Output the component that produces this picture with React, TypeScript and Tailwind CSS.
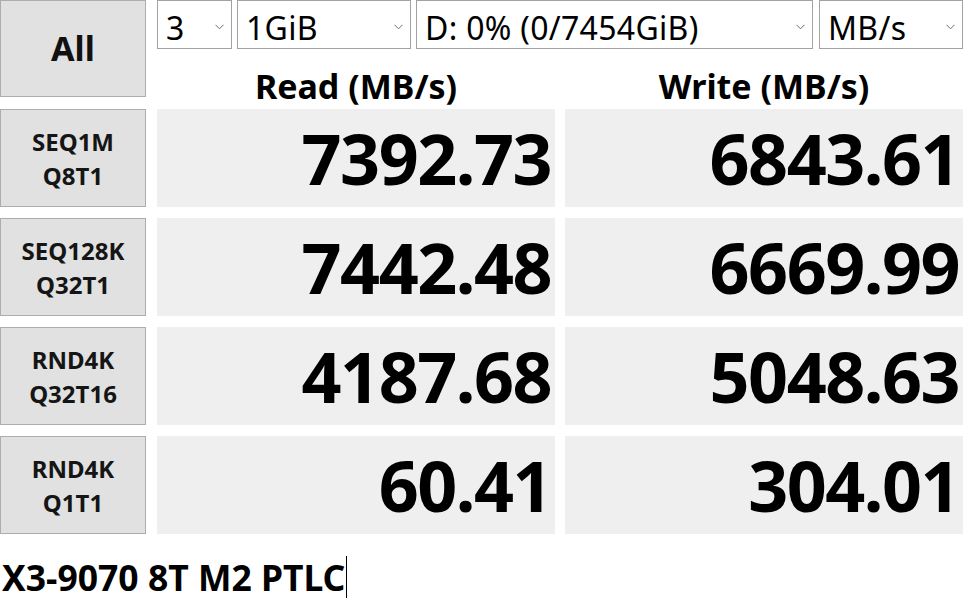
import React from "react";

const font = { fontFamily: '"Noto Sans", "Open Sans", sans-serif' };

function Chevron() {
  return (
    <svg width="9" height="6" viewBox="0 0 9 6" className="shrink-0 mt-[4px]">
      <path d="M0.5 0.8 L4.5 4.8 L8.5 0.8" fill="none" stroke="#6b6b6b" strokeWidth="1" />
    </svg>
  );
}

function Combo({ text, w }: { text: string; w: string }) {
  return (
    <div
      className={`${w} h-[49px] bg-white border border-[#a2a2a2] flex items-center justify-between pl-[8px] pr-[7px]`}
    >
      <span className="text-[32px] leading-none text-black pt-[6px] tracking-[0.3px]">{text}</span>
      <Chevron />
    </div>
  );
}

function LabelButton({ l1, l2 }: { l1: string; l2: string }) {
  return (
    <div className="w-[146px] h-[98px] bg-[#e1e1e1] border border-[#adadad] flex flex-col items-center justify-center font-bold text-[24px] leading-[34px] text-[#151515] pt-[2px]">
      <span>{l1}</span>
      <span>{l2}</span>
    </div>
  );
}

function Cell({ v }: { v: string }) {
  return (
    <div className="h-[98px] bg-[#efefef] flex items-center justify-end pr-[4px]">
      <span className="font-bold text-[70px] leading-none tracking-[-1.5px] text-black">{v}</span>
    </div>
  );
}

const rows = [
  { l1: "SEQ1M", l2: "Q8T1", r: "7392.73", w: "6843.61" },
  { l1: "SEQ128K", l2: "Q32T1", r: "7442.48", w: "6669.99" },
  { l1: "RND4K", l2: "Q32T16", r: "4187.68", w: "5048.63" },
  { l1: "RND4K", l2: "Q1T1", r: "60.41", w: "304.01" },
];

export default function App() {
  return (
    <div className="w-[970px] h-[603px] bg-white overflow-hidden" style={font}>
      <div className="flex h-[109px]">
        <div className="w-[146px] h-[97px] bg-[#e1e1e1] border border-[#adadad] flex items-center justify-center font-bold text-[34px] text-[#111]">
          All
        </div>
        <div className="flex flex-col ml-[11px]">
          <div className="flex gap-[5px]">
            <Combo text="3" w="w-[75px]" />
            <Combo text="1GiB" w="w-[174px]" />
            <Combo text="D: 0% (0/7454GiB)" w="w-[397px]" />
            <Combo text="MB/s" w="w-[144px] ml-[1px]" />
          </div>
          <div className="flex flex-1 items-end pb-[1px]">
            <div className="w-[398px] text-center font-bold text-[34px] leading-[44px] text-black">Read (MB/s)</div>
            <div className="w-[398px] ml-[10px] text-center font-bold text-[34px] leading-[44px] text-black">
              Write (MB/s)
            </div>
          </div>
        </div>
      </div>
      <div className="flex flex-col gap-[11px]">
        {rows.map((r, i) => (
          <div key={i} className="flex">
            <LabelButton l1={r.l1} l2={r.l2} />
            <div className="w-[398px] ml-[11px]">
              <Cell v={r.r} />
            </div>
            <div className="w-[398px] ml-[10px]">
              <Cell v={r.w} />
            </div>
          </div>
        ))}
      </div>
      <div className="mt-[19px] flex items-center pl-[2px]">
        <span className="font-bold text-[35.5px] leading-[48px] text-black">X3-9070 8T M2 PTLC</span>
        <span className="w-px h-[42px] bg-black ml-[1px]" />
      </div>
    </div>
  );
}
